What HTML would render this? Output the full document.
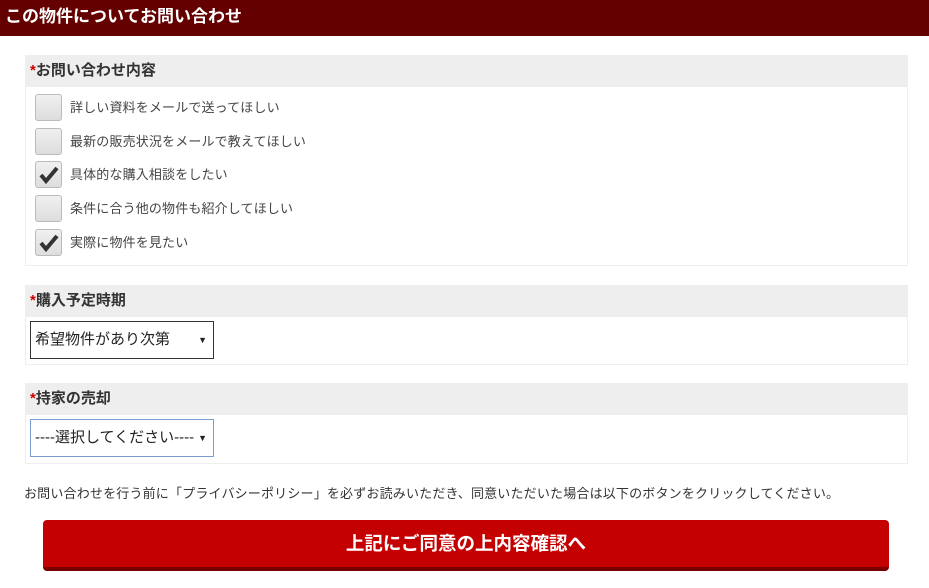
<!DOCTYPE html><html><head><meta charset="utf-8"><style>
*{box-sizing:border-box;margin:0;padding:0}
body{width:929px;height:588px;background:#fff;font-family:"Liberation Sans","Noto Sans CJK JP",sans-serif;color:#333;position:relative;overflow:hidden}
.top{position:absolute;left:0;top:0;width:929px;height:36px;background:#640000;color:#fff;font-weight:bold;font-size:17px;line-height:34px;padding-left:5px}
.sec{position:absolute;left:25px;width:883px;border:1px solid #eee;border-top:none}
.sh{height:32px;background:#eee;font-weight:bold;font-size:15px;line-height:32px;padding-left:4px;color:#333}
.sh b{color:#c00}
.row{position:absolute;left:9px;height:27px;font-size:13px;line-height:27px}
.cb{position:absolute;left:0;top:0;width:27px;height:27px;border:1px solid #bbb;border-radius:3px;background:linear-gradient(#f0f0f0,#ddd)}
.row span{position:absolute;left:35px;white-space:nowrap;color:#444;letter-spacing:0.15px}
.sel{position:absolute;left:4px;width:184px;height:38px;border:1px solid #333;font-size:15px;line-height:36px;padding-left:4px;color:#222;background:#fff}
.sel i{position:absolute;right:6px;font-style:normal;font-size:9px}
.note{position:absolute;left:24px;top:483px;font-size:13px;color:#333;letter-spacing:0.18px;white-space:nowrap}
.btn{position:absolute;left:43px;top:520px;width:846px;height:51px;background:#c40000;border-radius:4px;border-bottom:4px solid #7a0000;color:#fff;font-weight:bold;font-size:18.5px;text-align:center;line-height:47px}
</style></head><body>
<div class="top">この物件についてお問い合わせ</div>
<div class="sec" style="top:55px;height:211px"><div class="sh"><b>*</b>お問い合わせ内容</div>
<div class="row" style="top:39px"><div class="cb"></div><span>詳しい資料をメールで送ってほしい</span></div>
<div class="row" style="top:73px"><div class="cb"></div><span>最新の販売状況をメールで教えてほしい</span></div>
<div class="row" style="top:106px"><div class="cb"><svg width="25" height="25"><path d="M5 13 L10 19 L21 6" stroke="#333" stroke-width="4" fill="none"/></svg></div><span>具体的な購入相談をしたい</span></div>
<div class="row" style="top:140px"><div class="cb"></div><span>条件に合う他の物件も紹介してほしい</span></div>
<div class="row" style="top:174px"><div class="cb"><svg width="25" height="25"><path d="M5 13 L10 19 L21 6" stroke="#333" stroke-width="4" fill="none"/></svg></div><span>実際に物件を見たい</span></div>
</div>
<div class="sec" style="top:285px;height:80px"><div class="sh"><b>*</b>購入予定時期</div>
<div class="sel" style="top:36px">希望物件があり次第<i>▼</i></div></div>
<div class="sec" style="top:383px;height:81px"><div class="sh"><b>*</b>持家の売却</div>
<div class="sel" style="top:36px;border-color:#7a9ccf">----選択してください----<i>▼</i></div></div>
<div class="note">お問い合わせを行う前に「プライバシーポリシー」を必ずお読みいただき、同意いただいた場合は以下のボタンをクリックしてください。</div>
<div class="btn">上記にご同意の上内容確認へ</div>
</body></html>
